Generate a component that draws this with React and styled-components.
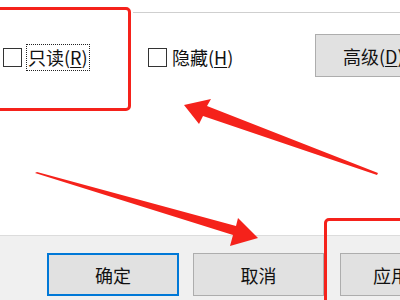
import React from "react";
import styled, { createGlobalStyle } from "styled-components";

const Global = createGlobalStyle`
  html, body { margin: 0; padding: 0; width: 400px; height: 300px; overflow: hidden; background: #fff; }
  #root { width: 400px; height: 300px; }
`;

const Dialog = styled.div`
  position: relative;
  width: 400px;
  height: 300px;
  display: flex;
  flex-direction: column;
  overflow: hidden;
  font-family: "Noto Sans CJK SC", "Microsoft YaHei", sans-serif;
  font-size: 18px;
  color: #111;
`;

const Body = styled.div`
  height: 235px;
  background: #fff;
  display: flex;
  flex-direction: column;
`;

const Separator = styled.div`
  margin: 12px 0 0 133px;
  border-top: 1px solid #cfcfcf;
`;

const AttrRow = styled.div`
  display: flex;
  align-items: center;
  margin-top: 21px;
  padding-left: 3px;
  height: 43px;
`;

const Check = styled.label`
  flex: none;
  width: ${(p) => p.$w}px;
  display: flex;
  align-items: center;
  gap: ${(p) => p.$gap}px;
  margin-top: 3px;
  white-space: nowrap;
`;

const Box = styled.span`
  box-sizing: border-box;
  width: 19px;
  height: 19px;
  border: 1.5px solid #333;
  background: #fff;
  flex: none;
`;

const Label = styled.span`
  padding: 1px 1px 2px;
  border: 1px dotted ${(p) => (p.$focus ? "#222" : "transparent")};
  line-height: 22px;
`;

const U = styled.span`
  text-decoration: underline;
  text-underline-offset: 2px;
`;

const Button = styled.div`
  flex: none;
  box-sizing: border-box;
  width: ${(p) => p.$w}px;
  height: 43px;
  margin-left: ${(p) => p.$ml || 0}px;
  background: #e1e1e1;
  border: ${(p) => (p.$default ? "2px solid #0078d7" : "1px solid #adadad")};
  display: flex;
  align-items: center;
  justify-content: ${(p) => (p.$left ? "flex-start" : "center")};
  padding-left: ${(p) => p.$pl || 0}px;
  white-space: nowrap;
  line-height: 1;
`;

const Footer = styled.div`
  flex: 1;
  background: #f0f0f0;
  border-top: 1px solid #dcdcdc;
  display: flex;
  align-items: flex-start;
  padding: 17px 0 0 47px;
`;

const RedBox = styled.div`
  position: absolute;
  box-sizing: border-box;
  border: 3px solid #f5221b;
  border-radius: 5px;
  left: ${(p) => p.$l}px;
  top: ${(p) => p.$t}px;
  width: ${(p) => p.$w}px;
  height: ${(p) => p.$h}px;
  pointer-events: none;
`;

const Overlay = styled.svg`
  position: absolute;
  left: 0;
  top: 0;
  width: 400px;
  height: 300px;
  pointer-events: none;
`;

export default function App() {
  return (
    <>
      <Global />
      <Dialog>
        <Body>
          <Separator />
          <AttrRow>
            <Check $gap={4} $w={145}>
              <Box />
              <Label $focus>
                只读(<U>R</U>)
              </Label>
            </Check>
            <Check $gap={3} $w={167}>
              <Box />
              <Label>
                隐藏(<U>H</U>)
              </Label>
            </Check>
            <Button $w={110} $left $pl={27}>
              高级(<U>D</U>)
            </Button>
          </AttrRow>
        </Body>
        <Footer>
          <Button $w={132} $default>确定</Button>
          <Button $w={131} $ml={14}>取消</Button>
          <Button $w={131} $ml={16} $left $pl={32}>应用(<U>A</U>)</Button>
        </Footer>
        <RedBox $l={-10} $t={7} $w={141} $h={104} />
        <RedBox $l={324} $t={218} $w={100} $h={100} />
        <Overlay viewBox="0 0 400 300">
          <polygon
            fill="#f5221b"
            points="184,105 211,99 207,106 378,173 377,175 203,116 199,124"
          />
          <polygon
            fill="#f5221b"
            points="35,173 37,172 236,226 238,218 258,238 230,246 233,235"
          />
        </Overlay>
      </Dialog>
    </>
  );
}
